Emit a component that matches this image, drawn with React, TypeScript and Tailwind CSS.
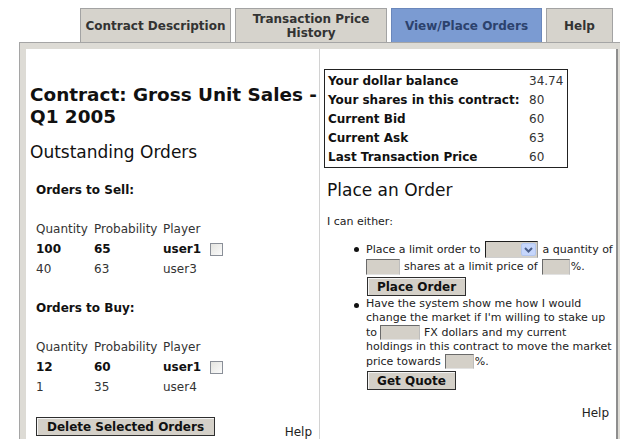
import React from 'react'

const tabs = [
    { label: 'Contract Description', w: 'w-[151px]', active: false },
    { label: 'Transaction Price\nHistory', w: 'w-[152px]', active: false },
    { label: 'View/Place Orders', w: 'w-[151px]', active: true },
    { label: 'Help', w: 'w-[67px]', active: false },
];

type Order = { qty: string; prob: string; player: string; mine: boolean };

const sellOrders: Order[] = [
    { qty: '100', prob: '65', player: 'user1', mine: true },
    { qty: '40', prob: '63', player: 'user3', mine: false },
];

const buyOrders: Order[] = [
    { qty: '12', prob: '60', player: 'user1', mine: true },
    { qty: '1', prob: '35', player: 'user4', mine: false },
];

const stats = [
    ['Your dollar balance', '34.74'],
    ['Your shares in this contract:', '80'],
    ['Current Bid', '60'],
    ['Current Ask', '63'],
    ['Last Transaction Price', '60'],
];

const OrderTable = ({ orders }: { orders: Order[] }) => (
    <div className="mt-[20px] text-[12px]">
        <div className="grid h-[21px] grid-cols-[58px_69px_auto] items-center text-[#333]">
            <span>Quantity</span>
            <span>Probability</span>
            <span>Player</span>
        </div>
        {orders.map((o) => (
            <div
                key={o.qty + o.player}
                className={`grid h-[20px] grid-cols-[58px_69px_auto] items-center ${o.mine ? 'font-bold text-[#111]' : 'text-[#333]'}`}>
                <span>{o.qty}</span>
                <span>{o.prob}</span>
                <span className="flex items-center">
                    {o.player}
                    {o.mine && (
                        <span className="ml-[9px] inline-block h-[13px] w-[13px] border border-[#8a8f98] bg-gradient-to-br from-[#e4e4e0] to-[#fbfbfb]" />
                    )}
                </span>
            </div>
        ))}
    </div>
);

const Field = ({ w, h = 'h-[16px]', ml = 'ml-[4px]' }: { w: string; h?: string; ml?: string }) => (
    <span className={`${ml} ${w} ${h} inline-block border border-t-[#6a6a6a] border-l-[#6a6a6a] border-b-[#e2e2e2] border-r-[#bdbdbd] bg-[#d4d0c8]`} />
);

const Button = ({ label, w }: { label: string; w: string }) => (
    <button
        type="button"
        className={`${w} flex h-[19px] items-center justify-center border border-[#2e2e2e] bg-[#d4d0c8] text-[12px] font-bold text-[#111] shadow-[inset_1px_1px_0_#f4f4f4]`}>
        {label}
    </button>
);

const Dot = () => (
    <span className="w-[12px] shrink-0">
        <span className="mt-[6px] block h-[5px] w-[5px] rounded-full bg-[#111]" />
    </span>
);

export default function App() {
    return (
        <div className="h-[439px] w-[640px] overflow-hidden bg-white font-['DejaVu_Sans',sans-serif] text-[#222]">
            {/* tab strip */}
            <div className="flex gap-1 pl-[80px] pt-[8px]">
                {tabs.map((t) => (
                    <div
                        key={t.label}
                        className={`${t.w} flex h-[34px] items-center justify-center whitespace-pre-line border border-b-0 text-center text-[12px] font-bold leading-[14px] ${t.active ? 'border-[#6a87bb] bg-[#7b9bd2] text-[#2c426d]' : 'border-[#a3a3a3] bg-[#d6d3cc] text-[#333]'} ${t.label === 'Help' ? 'text-[#111]' : ''}`}>
                        {t.label}
                    </div>
                ))}
            </div>

            {/* panel */}
            <div className="ml-[19px] w-[601px] border-l border-t border-[#a5a5a5] bg-[#dddbd5] pl-[6px] pr-[2px] pt-[6px]">
                <div className="flex h-[400px] border-r-2 border-[#8e8e8e] bg-white">
                    {/* left column */}
                    <div className="w-[294px] shrink-0 border-r border-[#d2d2d2] pl-[4px] pt-[35px]">
                        <h1 className="w-[290px] text-[18.4px] font-bold leading-[22px] text-[#111]">
                            Contract: Gross Unit Sales - Q1 2005
                        </h1>
                        <h2 className="mt-[14px] text-[17px] leading-[20px] text-[#111]">Outstanding Orders</h2>
                        <div className="pl-[6px]">
                            <div className="mt-[20px] text-[12px] font-bold leading-[16px] text-[#111]">Orders to Sell:</div>
                            <OrderTable orders={sellOrders} />
                            <div className="mt-[21px] text-[12px] font-bold leading-[16px] text-[#111]">Orders to Buy:</div>
                            <OrderTable orders={buyOrders} />
                            <div className="mt-[20px] flex items-start justify-between pr-[7px]">
                                <Button label="Delete Selected Orders" w="w-[179px]" />
                                <span className="mt-[8px] text-[12px] leading-[14px] text-[#222]">Help</span>
                            </div>
                        </div>
                    </div>

                    {/* right column */}
                    <div className="w-[295px] shrink-0 pl-[4px] pt-[20px]">
                        <div className="w-[244px] border border-[#222] px-[3px] py-[1px] text-[12px]">
                            {stats.map(([k, v]) => (
                                <div key={k} className="grid h-[19px] grid-cols-[201px_auto] items-center">
                                    <span className="font-bold text-[#111]">{k}</span>
                                    <span className="text-[#333]">{v}</span>
                                </div>
                            ))}
                        </div>
                        <h2 className="mt-[12px] pl-[3px] text-[17px] leading-[20px] text-[#111]">Place an Order</h2>
                        <p className="mt-[15px] pl-[3px] text-[11px] leading-[14px]">I can either:</p>

                        <ul className="ml-[30px] mt-[12px] text-[11px] leading-[14px] text-[#222]">
                            <li className="flex">
                                <Dot />
                                <div>
                                    <div className="flex h-[17px] items-center">
                                        <span>Place a limit order to</span>
                                        <span className="ml-[4px] flex h-[17px] w-[53px] justify-end border border-t-[#1e1e1e] border-l-[#1e1e1e] border-b-[#cfcfcf] border-r-[#9a9a9a] bg-[#d4d0c8] p-[1px]">
                                            <span className="flex h-full w-[15px] items-center justify-center rounded-[2px] border border-[#b3c6ee] bg-[#c6d6fb]">
                                                <svg width="9" height="6" viewBox="0 0 9 6">
                                                    <path d="M1 1l3.5 3.5L8 1" fill="none" stroke="#4b5f8a" strokeWidth="2" />
                                                </svg>
                                            </span>
                                        </span>
                                        <span className="ml-[5px]">a quantity of</span>
                                    </div>
                                    <div className="flex h-[17px] items-center">
                                        <Field w="w-[34px]" ml="ml-0" />
                                        <span className="ml-[4px]">shares at a limit price of</span>
                                        <Field w="w-[28px]" />
                                        <span className="ml-[1px]">%.</span>
                                    </div>
                                    <div className="ml-[1px] mt-[2px]">
                                        <Button label="Place Order" w="w-[99px]" />
                                    </div>
                                </div>
                            </li>
                            <li className="mt-[1px] flex">
                                <Dot />
                                <div>
                                    <div className="h-[14px]">Have the system show me how I would</div>
                                    <div className="h-[14px]">change the market if I'm willing to stake up</div>
                                    <div className="flex h-[15px] items-center">
                                        <span>to</span>
                                        <Field w="w-[40px]" h="h-[15px]" ml="ml-[3px]" />
                                        <span className="ml-[4px]">FX dollars and my current</span>
                                    </div>
                                    <div className="h-[14px]">holdings in this contract to move the market</div>
                                    <div className="flex h-[15px] items-center">
                                        <span>price towards</span>
                                        <Field w="w-[29px]" h="h-[15px]" />
                                        <span className="ml-[1px]">%.</span>
                                    </div>
                                    <div className="ml-[1px] mt-[2px]">
                                        <Button label="Get Quote" w="w-[89px]" />
                                    </div>
                                </div>
                            </li>
                        </ul>
                        <div className="mt-[16px] pr-[6px] text-right text-[12px] leading-[14px]">Help</div>
                    </div>
                </div>
            </div>
        </div>
    )
}
